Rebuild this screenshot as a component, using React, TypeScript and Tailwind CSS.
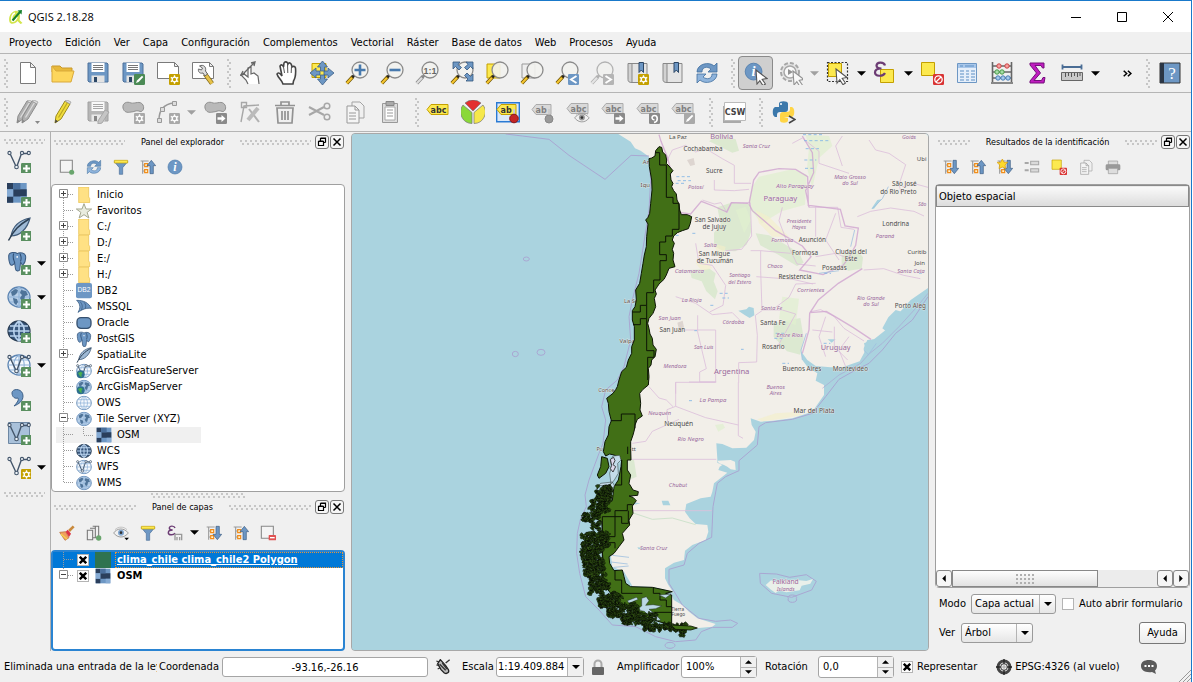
import type { ReactNode } from "react";

const BLUE = "#6d97c4";
const NAVY = "#2c4766";
const YEL = "#fce94f";
const GOLD = "#c4a000";

/* ---------- icon primitives ---------- */

function Icon({ children, className = "h-6 w-6", dim = false }: { children: ReactNode; className?: string; dim?: boolean }) {
  return (
    <svg viewBox="0 0 24 24" className={`${className} shrink-0 ${dim ? "opacity-60 grayscale" : ""}`} fill="none" aria-hidden="true">
      {children}
    </svg>
  );
}

function Badge({ kind, x = 13, y = 13 }: { kind: string; x?: number; y?: number }) {
  const fill: Record<string, string> = { plus: "#5a9060", star: GOLD, pen: "#4b8a55", no: "#d93434", right: "#8a8a8a", left: BLUE, fwd: "#b5b5b5", turn: "#8a8a8a", edit: "#a9a9a9", gstar: "#a9a9a9" };
  return (
    <g transform={`translate(${x} ${y})`}>
      <rect width="11" height="11" rx="1.2" fill={fill[kind]} />
      {kind === "plus" && <path d="M5.500 2v7M2 5.500h7" stroke="#fff" strokeWidth="2" />}
      {(kind === "star" || kind === "gstar") && <><path d="M5.500 1.300v8.400M1.800 3.400l7.400 4.200M9.200 3.400L1.800 7.600" stroke="#fff" strokeWidth="1.300" /><circle cx="5.500" cy="5.500" r="2.300" fill={kind === "star" ? GOLD : "#a9a9a9"} stroke="#fff" strokeWidth="1.300" /></>}
      {(kind === "pen" || kind === "edit") && <path d="M2 9l1-2.600L8 1.800l1.300 1.300L4.600 8z" fill="#fff" />}
      {kind === "no" && <><circle cx="5.500" cy="5.500" r="3.700" stroke="#fff" strokeWidth="1.300" /><path d="M3 8l5-5" stroke="#fff" strokeWidth="1.300" /></>}
      {kind === "right" && <path d="M1.500 4.300h4V2l4 3.500-4 3.500V6.700h-4z" fill="#fff" />}
      {kind === "left" && <path d="M8.500 2L3 5.500 8.500 9" stroke="#fff" strokeWidth="1.900" />}
      {kind === "fwd" && <path d="M2.500 2L8 5.500 2.500 9" stroke="#fff" strokeWidth="1.900" />}
      {kind === "turn" && <path d="M5 9.500C9.500 8.500 9 2.500 5.500 2.500S2.500 7 5.500 6.800" stroke="#fff" strokeWidth="1.600" />}
    </g>
  );
}

const Sheet = () => <path d="M4.500 1.500h10l5 5v16h-15zM14.500 1.500v5h5" fill="#fff" stroke="#7a7a7a" />;
const WideSheet = () => <path d="M1.500 1.500h17l4 4v12h-21zM18.500 1.500v4h4" fill="#fff" stroke="#7a7a7a" />;
const Disk = () => (
  <>
    <path d="M2 2h19l1 1v18H3l-1-1z" fill={BLUE} stroke="#4d709a" />
    <path d="M5.500 2h13v9h-13z" fill="#fff" />
    <path d="M7 4.500h10M7 6.500h10M7 8.500h10" stroke="#777" />
    <path d="M5.500 14.500h13v7h-13z" fill="#e3e3e3" />
    <path d="M8 16h3v5H8z" fill={NAVY} />
  </>
);
const Lens = ({ gray = false }: { gray?: boolean }) => (
  <>
    <path d="M1.800 22.200L8 15.600" stroke={gray ? "#888" : "#6b5200"} strokeWidth="3.600" />
    <path d="M1.800 22.200L7 16.700" stroke={gray ? "#ddd" : "#f4c430"} strokeWidth="2.200" />
    <path d="M7.500 16l2-2" stroke={gray ? "#888" : "#222"} strokeWidth="2.600" />
    <circle cx="15" cy="9" r="8" fill="#f2f2ee" fillOpacity="0.900" stroke="#8b8b8b" strokeWidth="1.300" />
  </>
);
const Tag = ({ on = false, w = 20, t = "abc" }: { on?: boolean; w?: number; t?: string }) => (
  <>
    <path d={`M1 11.500L5 6.500H${w + 2}v10H5z`} fill={on ? YEL : "#d9d9d9"} stroke={on ? GOLD : "#ababab"} />
    <text x="4.500" y="14.500" fontSize="8" fontWeight="700" fill={on ? "#333" : "#808080"} fontFamily="DejaVu Sans">{t}</text>
  </>
);
const Globe = ({ land = false, dark = false }: { land?: boolean; dark?: boolean }) => (
  <>
    <ellipse cx="12" cy="12" rx="11" ry="10" fill={dark ? "#38577d" : land ? "#b9d0e8" : "#f5f9fd"} stroke={dark ? "#2c3f55" : "#5d85b2"} strokeWidth="1.300" />
    <path d="M1.500 12h21M3 7h18M3 17h18M12 2v20M12 2c-7 5-7 15 0 20M12 2c7 5 7 15 0 20" stroke={dark ? "#b9d3ee" : "#8fb2d8"} strokeWidth={dark ? "1.600" : "1.100"} />
    {land && <path d="M4 7l4-3 3 1-1 3-2 2-3 1zM6 13l4 1 1 3-2 3-2-2zM14 5l5 1 2 4-3 1-1 4-2 2-2-4 2-3-2-2z" fill="#4f7499" />}
  </>
);
const VLine = ({ c = "#44566b" }: { c?: string }) => (
  <g stroke={c} strokeWidth="1.100" fill="#eef3f8">
    <path d="M3 4.500l6.500 14L14.500 4.500h6.500" fill="none" strokeWidth="1.400" />
    <circle cx="2.500" cy="4" r="1.600" /><circle cx="9.500" cy="18" r="1.800" /><circle cx="15" cy="4" r="1.600" /><circle cx="21.800" cy="4" r="1.600" />
  </g>
);
const Tiles = () => (
  <>
    <path d="M1 1h22v22H1z" fill={BLUE} />
    <path d="M1 1h7v7H1zM16 8h7v8h-7zM8 8h8v8H8zM1 16h7v7H1z" fill="#2a3f5c" />
    <path d="M8 1h8v7H8z" fill="#4a6f9c" />
    <path d="M1 8h7v8H1zM16 16h7v7h-7z" fill="#86abd4" />
  </>
);
const Elephant = () => (
  <>
    <path d="M2 6c0-5 8-5 10-3 3-2 10-1 10 4 0 4-1 7-3 9-2 1-2-2-3-3l-1 9c-1 2-5 2-5-1l-1-7c-1 2-4 4-5 2C2 13 2 9 2 6z" fill={BLUE} stroke="#3c5c82" strokeWidth="1.200" />
    <path d="M8 3c-2 4 0 7 1 11M15 3c2 3 2 6 1 9" stroke="#2f4d72" strokeWidth="1.200" /><circle cx="12" cy="7" r="1" fill="#fff" />
  </>
);
const Feather = () => (
  <>
    <path d="M23 1C13 3 6 8 4 19c8 0 16-6 19-18z" fill="#9fbad6" stroke="#3f5a78" strokeWidth="1.200" />
    <path d="M22 2C12 8 7 13 1.500 23.500" stroke="#2d4054" strokeWidth="1.500" />
  </>
);
const Refresh = () => (
  <>
    <path d="M2 11C2 3 14 0 19 5l3-3v9h-9l3-3C12 5 7 6 7 11z" fill={BLUE} stroke="#41709f" strokeWidth="0.800" />
    <path d="M22 13c0 8-12 11-17 6l-3 3v-9h9l-3 3c4 3 9 2 9-3z" fill="#8fb4dc" stroke="#41709f" strokeWidth="0.800" />
  </>
);
const Funnel = () => (
  <>
    <path d="M2 4h20l-7.500 9v10h-5V13z" fill={BLUE} stroke="#4d709a" />
    <path d="M2 2h20v4H2z" fill={YEL} stroke={GOLD} />
  </>
);
const Info = () => (
  <>
    <circle cx="12" cy="12" r="10.500" fill={BLUE} stroke="#4a78aa" />
    <text x="12" y="18" fontSize="18" fontStyle="italic" fontWeight="700" fill="#fff" textAnchor="middle" fontFamily="Liberation Serif">i</text>
  </>
);
const Branch = ({ up = false }: { up?: boolean }) => (
  <>
    <path d="M1 3h12M4 3v19M4 9h3M4 18h3" stroke="#999" strokeWidth="1.600" />
    <path d="M7 7h4.500v4.500H7zM7 16h4.500v4.500H7z" fill="#fff3d0" stroke="#f08c1a" strokeWidth="1.800" />
    {up ? <path d="M15 22V10h-4.500L17 2l6.500 8H20v12z" fill={BLUE} stroke="#3c5c82" /> : <path d="M15 2v12h-4.500L17 22l6.500-8H20V2z" fill={BLUE} stroke="#3c5c82" />}
  </>
);
const Cursor = ({ x = 0, y = 0 }: { x?: number; y?: number }) => (
  <path transform={`translate(${x} ${y})`} d="M0 0l11 8.500-4.800.8 3.200 4.700-2.400 1.700-3.200-5L1 14z" fill="#fff" stroke="#555" strokeWidth="1.100" />
);
const Book = () => (
  <>
    <path d="M3 2.500h19v19H7" fill="#e4e4e4" stroke="#888" />
    <path d="M3 2.500v16c0 2 1 3 4 3v-19z" stroke="#888" fill="#d2d2d2" />
    <path d="M14 1.500h4.500v10l-2.200-2.500-2.300 2.500z" fill={BLUE} stroke={NAVY} />
  </>
);
const Pencil = ({ y = true }: { y?: boolean }) => (
  <>
    <path d="M5 16L14 1l5 3-9 15-6 4z" fill={y ? "#f0dc3c" : "#b0b0b0"} stroke={y ? "#9b8a1c" : "#8d8d8d"} />
    <path d="M7.500 17.500l9-15" stroke={y ? "#b9a524" : "#ddd"} strokeWidth="1.200" />
    <path d="M14 1l5 3 1-2-4-2z" fill="#ddd" stroke="#999" strokeWidth="0.700" />
    <path d="M4.500 19.500L4 23l3-1.700z" fill={y ? "#444" : "#888"} />
  </>
);
const Blob = () => <path d="M2 8c-1-5 4-7 8-5 4 1 9-3 12 2 2 4-1 8-4 6-3-1-5 1-8 1-4 1-7 0-8-4z" fill="#b9b9b9" stroke="#909090" />;
const Docs = () => (
  <>
    <path d="M9 2h8l4 4v12H9z" fill="#f0f0f0" stroke="#a3a3a3" />
    <path d="M4 6h8l4 4v13H4zM12 6v4h4M6 13h7M6 16h7M6 19h7" fill="#f5f5f5" stroke="#999" />
  </>
);
const Eye = ({ c = "#7fa5cf" }: { c?: string }) => (
  <>
    <path d="M1 12C6 4 17 4 23 12c-6 8-16 8-22 0z" fill="#f1f1f1" stroke="#909090" strokeWidth="1.300" />
    <circle cx="12" cy="11.500" r="4.500" fill={c} /><circle cx="12" cy="11.500" r="2" fill="#333" />
    <path d="M3 7C8 2 16 2 21 7" stroke="#aaa" />
  </>
);
const FolderIco = () => <path d="M4 0h15v15l1.500 2v6.500H4z" fill="#ffe184" stroke="#e6bd4a" />;
const Epsilon = () => <path d="M12 4.500C11 1 4 .5 3.500 4.500 3.500 7 6 7.500 8.500 7.500 4.500 7.500 2 9 2 11.500c0 4 8 4.500 10 .5" stroke="#6c3c74" strokeWidth="2.200" />;

/* ---------- controls ---------- */

function Tool({ label, children, active = false, dim = false }: { label: string; children: ReactNode; active?: boolean; dim?: boolean }) {
  return (
    <button type="button" aria-label={label} className={`flex h-[34px] w-[35px] shrink-0 items-center justify-center ${active ? "rounded-sm border border-[#8a8a8a] bg-[#cfcfcf]" : ""}`}>
      <Icon dim={dim}>{children}</Icon>
    </button>
  );
}

function MiniTool({ label, children, dim = false }: { label: string; children: ReactNode; dim?: boolean }) {
  return (
    <button type="button" aria-label={label} className="flex h-6 w-[27px] shrink-0 items-center justify-center">
      <Icon className="h-4 w-4" dim={dim}>{children}</Icon>
    </button>
  );
}

function Caret({ dim = false, label = "Más opciones" }: { dim?: boolean; label?: string }) {
  return (
    <button type="button" aria-label={label} className="flex h-6 w-3 shrink-0 items-center justify-center">
      <svg viewBox="0 0 10 5" className="h-[5px] w-[9px]" aria-hidden="true"><path d="M0 0h10L5 5z" fill={dim ? "#a0a0a0" : "#000"} /></svg>
    </button>
  );
}

function Grip({ className }: { className: string }) {
  return <div aria-hidden="true" className={`bg-[radial-gradient(circle_at_1px_1px,#c6c6c6_1px,transparent_1px),radial-gradient(circle_at_3px_4px,#c6c6c6_1px,transparent_1px)] bg-[length:5px_6px] ${className}`} />;
}

function VGrip({ className = "" }: { className?: string }) {
  return <div className={`flex shrink-0 justify-center ${className}`}><Grip className="h-[29px] w-[5px]" /></div>;
}

function PanelTitle({ title }: { title: string }) {
  return (
    <div className="flex h-4 items-center">
      <Grip className="ml-[3px] h-[5px] flex-1" />
      <h2 className="px-4 text-[9px] leading-4">{title}</h2>
      <Grip className="mr-1 h-[5px] flex-1" />
      <button type="button" aria-label={`Desacoplar ${title}`} className="mr-px flex h-[14px] w-[14px] items-center justify-center rounded-[3px] border border-[#777] bg-[#f6f6f6]">
        <svg viewBox="0 0 10 10" className="h-[10px] w-[10px]" fill="none" stroke="#000" aria-hidden="true"><path d="M3.500 1h5v4.500M3.500 1.500h5M1.500 4.500h5v4h-5zM1.500 4h5M3.500 1v3M8.500 5.500h-2" strokeWidth="1.200" /></svg>
      </button>
      <button type="button" aria-label={`Cerrar ${title}`} className="mr-px flex h-[14px] w-[14px] items-center justify-center rounded-[3px] border border-[#777] bg-[#f6f6f6]">
        <svg viewBox="0 0 10 10" className="h-[10px] w-[10px]" stroke="#000" strokeWidth="1.500" aria-hidden="true"><path d="M1.500 1.500l7 7M8.500 1.500l-7 7" /></svg>
      </button>
    </div>
  );
}

function CheckBox({ id, checked }: { id: string; checked: boolean }) {
  return (
    <span className="relative flex h-3 w-3 shrink-0 items-center justify-center">
      <input id={id} type="checkbox" defaultChecked={checked} className="peer h-3 w-3 appearance-none border border-[#b4b4b4] bg-white" />
      <svg viewBox="0 0 10 10" className="pointer-events-none absolute hidden h-2 w-2 peer-checked:block" stroke="#000" strokeWidth="3" aria-hidden="true"><path d="M1 1l8 8M9 1L1 9" /></svg>
    </span>
  );
}

function Combo({ id, options, className }: { id: string; options: string[]; className: string }) {
  return (
    <span className={`relative flex h-5 items-center rounded-[3px] border border-[#9a9a9a] bg-linear-to-b from-white to-[#e6e6e6] ${className}`}>
      <select id={id} className="h-full w-full appearance-none bg-transparent pr-4 pl-[3px] text-[11px]">
        {options.map((o) => <option key={o}>{o}</option>)}
      </select>
      <span className="pointer-events-none absolute inset-y-0 right-0 flex w-4 items-center justify-center border-l border-[#b4b4b4]">
        <svg viewBox="0 0 8 4" className="h-1 w-2" aria-hidden="true"><path d="M0 0h8L4 4z" /></svg>
      </span>
    </span>
  );
}

function Spin({ id, value }: { id: string; value: string }) {
  return (
    <span className="flex h-[22px] w-[76px] shrink-0 rounded-[3px] border border-[#a5a5a5] bg-white">
      <input id={id} defaultValue={value} className="w-0 flex-1 bg-transparent px-1 text-[11px]" />
      <span className="flex w-4 flex-col border-l border-[#b4b4b4] bg-[#f0f0f0]">
        <button type="button" aria-label="Aumentar" className="flex flex-1 items-center justify-center border-b border-[#b4b4b4]"><svg viewBox="0 0 8 4" className="h-1 w-[7px]" aria-hidden="true"><path d="M0 4h8L4 0z" /></svg></button>
        <button type="button" aria-label="Disminuir" className="flex flex-1 items-center justify-center"><svg viewBox="0 0 8 4" className="h-1 w-[7px]" aria-hidden="true"><path d="M0 0h8L4 4z" /></svg></button>
      </span>
    </span>
  );
}

/* ---------- explorer tree ---------- */

type TreeRow = { name: string; icon: ReactNode; mark?: "+" | "-"; child?: boolean };

const MiniEarth = () => <><circle cx="7" cy="17" r="6" fill="#2d6f8e" /><path d="M3 15l4-2 3 2-2 3 1 3-3-1z" fill="#4bb04f" /></>;

const treeRows: TreeRow[] = [
  { name: "Inicio", icon: <FolderIco />, mark: "+" },
  { name: "Favoritos", icon: <path d="M12 1l3 8h8.500l-6.800 5 2.600 8.500L12 17.500 4.700 22.500l2.600-8.500L.5 9H9z" fill="#e9ecdf" stroke="#a3a68f" strokeWidth="1.500" /> },
  { name: "C:/", icon: <FolderIco />, mark: "+" },
  { name: "D:/", icon: <FolderIco />, mark: "+" },
  { name: "E:/", icon: <FolderIco />, mark: "+" },
  { name: "H:/", icon: <FolderIco />, mark: "+" },
  { name: "DB2", icon: <><rect width="24" height="23" rx="3" fill={BLUE} /><text x="12" y="14" fontSize="10" textAnchor="middle" fill="#fff" fontFamily="Liberation Sans">DB2</text></> },
  { name: "MSSQL", icon: <path d="M1 2c11 0 18 4 22 12-7-1-13 1-20 6 4-6 4-12-2-18zM6 4c4 4 4 8 2 13M12 5c3 3 3 6 2 9" fill={BLUE} stroke="#3f6188" strokeWidth="1.300" /> },
  { name: "Oracle", icon: <rect x="1.500" y="4" width="21" height="16" rx="6" fill={BLUE} stroke="#35506f" strokeWidth="2" /> },
  { name: "PostGIS", icon: <Elephant /> },
  { name: "SpatiaLite", icon: <Feather />, mark: "+" },
  { name: "ArcGisFeatureServer", icon: <><Globe /><VLine /><MiniEarth /></> },
  { name: "ArcGisMapServer", icon: <><Globe land /><MiniEarth /></> },
  { name: "OWS", icon: <Globe /> },
  { name: "Tile Server (XYZ)", icon: <Globe land />, mark: "-" },
  { name: "OSM", icon: <Tiles />, child: true },
  { name: "WCS", icon: <Globe dark /> },
  { name: "WFS", icon: <><Globe /><VLine /></> },
  { name: "WMS", icon: <Globe land /> },
];

function BranchMark({ mark, first = false, last = false }: { mark?: "+" | "-"; first?: boolean; last?: boolean }) {
  return (
    <svg viewBox="0 0 20 16" className="h-4 w-5 shrink-0" fill="none" aria-hidden="true">
      <path d={`M7.500 ${first ? 7 : 0}V${last ? 8 : 16}M8 7.500h10`} stroke="#9a9a9a" strokeDasharray="1 1" />
      {mark && <path d="M3.500 2.500h8v8h-8z" fill="#fff" stroke="#8c8c8c" />}
      {mark && <path d={mark === "+" ? "M5 6.500h5M7.500 4v5" : "M5 6.500h5"} stroke="#444" />}
    </svg>
  );
}

/* ---------- map ---------- */

const provinceNames: [string, number, number, number][] = [
  ["Bolivia", 518, 27, 22], ["Goiás", 1080, 26, 17], ["Santa Cruz", 622, 53, 17], ["Potosí", 440, 176, 17], ["Alto Paraguay", 738, 173, 18],
  ["Paraguay", 694, 213, 23], ["Mato Grosso", 903, 147, 17], ["do Sul", 903, 166, 17], ["Presidente", 750, 278, 16], ["Hayes", 750, 297, 16],
  ["Formosa", 700, 335, 17], ["Paraná", 1008, 323, 17], ["Salta", 484, 350, 17], ["Chaco", 678, 413, 17], ["Catamarca", 421, 429, 18],
  ["Santiago", 572, 442, 16], ["del Estero", 572, 461, 16], ["Corrientes", 785, 486, 18], ["Santa Cata", 1086, 429, 17], ["Rio Grande", 966, 509, 17],
  ["do Sul", 966, 528, 17], ["La Rioja", 428, 516, 17], ["San Juan", 362, 570, 17], ["Córdoba", 553, 581, 17], ["Santa Fe", 668, 539, 17],
  ["Entre Ríos", 722, 620, 18], ["Uruguay", 860, 659, 22], ["San Luis", 464, 657, 16], ["Mendoza", 378, 714, 17], ["Argentina", 548, 732, 23],
  ["Buenos", 680, 777, 17], ["Aires", 680, 796, 17], ["La Pampa", 492, 817, 18], ["Neuquén", 332, 855, 17], ["Río Negro", 425, 934, 18],
  ["Chubut", 387, 1071, 17], ["Santa Cruz", 314, 1260, 17], ["Falkland", 710, 1361, 20], ["Islands", 710, 1382, 17], ["São", 1120, 229, 15],
];

const cityNames: [string, number, number, number][] = [
  ["La Paz", 387, 27, 18], ["Cochabamba", 462, 62, 19], ["Sucre", 496, 129, 19], ["Ubi", 1118, 94, 18], ["São José", 1066, 168, 19], ["do Rio Preto", 1048, 192, 19],
  ["San Salvado", 491, 276, 19], ["de Jujuy", 496, 298, 19], ["Londrina", 1040, 289, 19], ["Asunción", 790, 336, 19], ["Formosa", 768, 374, 19],
  ["Ciudad del", 906, 373, 19], ["Este", 906, 394, 19], ["Curitib", 1104, 371, 18], ["Join", 1112, 406, 18], ["San Migue", 496, 378, 19], ["de Tucumán", 498, 400, 19],
  ["Posadas", 856, 419, 19], ["Resistencia", 738, 446, 19], ["Porto Aleg", 1084, 534, 19], ["Santa Fe", 672, 584, 19], ["San Juan", 370, 606, 19],
  ["Rosario", 673, 657, 19], ["Buenos Aires", 759, 723, 19], ["Montevideo", 904, 722, 19], ["Neuquén", 389, 888, 20], ["Mar del Plata", 795, 850, 20],
  ["La Se", 246, 518, 17], ["Valpa", 235, 639, 18], ["Conce", 172, 785, 17], ["Iqu", 289, 170, 18], ["Ar", 291, 102, 18], ["Pu", 152, 964, 16], ["tt", 254, 964, 16],
  ["Tierra", 386, 1442, 14], ["Fuego", 388, 1458, 14],
];

const islandBands: [number, number, number, number, number][] = [
  [112, 158, 318, 362, 60], [94, 150, 355, 400, 60], [72, 120, 398, 422, 28], [100, 124, 425, 455, 12], [70, 150, 458, 505, 90], [68, 130, 500, 545, 80],
  [76, 134, 540, 590, 75], [90, 150, 580, 625, 70], [92, 130, 620, 640, 18], [120, 190, 640, 680, 70], [145, 235, 672, 708, 75], [190, 290, 700, 732, 75], [255, 385, 732, 750, 75], [364, 378, 752, 768, 8],
];

function buildIslands() {
  let seed = 71;
  const rnd = () => {
    seed = (seed * 16807) % 2147483647;
    return seed / 2147483647;
  };
  let d = "";
  for (const [x0, x1, y0, y1, n] of islandBands) {
    for (let i = 0; i < n; i++) {
      const cx = x0 + rnd() * (x1 - x0);
      const cy = y0 + rnd() * (y1 - y0);
      for (let k = 0; k < 7; k++) {
        const a = (k / 7) * Math.PI * 2;
        const r = 2 + rnd() * 7;
        d += `${k ? "L" : "M"}${(cx + Math.cos(a) * r).toFixed(1)} ${(cy + Math.sin(a) * r).toFixed(1)}`;
      }
      d += "Z";
    }
  }
  return d;
}
const islands = buildIslands();

const landPoints = "208,12 245,35 258,55 275,62 300,80 320,200 310,300 295,430 275,520 270,640 235,740 215,790 205,880 195,960 225,1000 215,1080 200,1200 200,1240 186,1280 190,1310 225,1325 250,1368 310,1371 345,1378 374,1388 358,1365 348,1345 348,1315 375,1298 405,1290 408,1262 430,1245 470,1230 478,1205 475,1185 440,1182 422,1165 408,1145 412,1122 455,1105 485,1100 490,1085 495,1060 520,1040 535,1028 508,1020 512,1010 520,1005 505,998 505,988 502,940 520,942 550,955 592,953 615,930 620,905 608,885 605,865 635,875 672,872 730,865 790,845 825,795 825,765 800,752 805,730 775,710 760,690 757,665 775,690 800,708 845,712 880,712 932,694 950,660 945,640 975,628 1010,600 1045,555 1085,510 1137,474 1400,300 1400,-50 208,-50";

const chilePoints = "318,78 320,62 330,50 338,52 341,66 350,75 353,90 352,100 360,108 372,122 364,132 366,150 372,160 368,170 374,182 382,192 384,210 390,222 392,240 397,254 415,254 428,260 424,280 418,296 400,302 385,308 374,318 370,330 376,340 370,358 374,370 372,390 378,410 360,415 352,435 345,448 330,462 325,470 318,480 322,492 316,505 320,530 312,550 300,565 296,580 300,595 303,612 310,625 312,645 322,658 318,680 308,690 306,705 298,715 300,740 298,765 282,778 272,790 275,820 273,840 280,858 265,868 258,885 256,900 252,915 245,935 245,955 246,990 235,990 235,1020 245,1035 240,1060 252,1080 268,1085 266,1096 240,1098 252,1102 262,1112 250,1128 252,1150 240,1170 242,1185 220,1210 225,1230 210,1250 195,1270 180,1280 182,1300 195,1322 220,1320 225,1340 230,1360 245,1370 310,1372 370,1385 350,1390 368,1395 368,1485 330,1475 300,1465 270,1450 230,1430 200,1410 170,1370 160,1340 162,1290 158,1240 140,1220 160,1200 158,1175 130,1160 140,1140 155,1110 190,1112 195,1070 208,1050 216,1010 218,990 206,980 195,975 182,972 170,978 163,965 168,935 178,915 180,890 187,872 180,845 178,820 173,805 192,790 200,779 205,770 210,750 218,725 232,712 238,690 248,670 248,650 256,630 256,590 250,570 250,542 258,530 262,510 260,480 272,460 277,430 282,400 286,375 292,350 293,320 297,282 290,270 297,262 302,250 305,220 309,180 308,150 301,110 300,86 308,84";

function MapCanvas() {
  return (
    <svg viewBox="-591 12 1728 1548" preserveAspectRatio="xMidYMid slice" className="h-full w-full" role="img" aria-label="Mapa de Chile sobre OSM">
      <rect x="-2000" y="-1000" width="6000" height="4000" fill="#aad3df" />
      <polygon points={landPoints} fill="#f2efe9" />
      <path d="M505 992L545 990 558 995 560 1020 545 1018 535 1010 525 1005 510 1000ZM366 1390L374 1410 400 1425 420 1445 445 1465 500 1482 490 1490 440 1495 368 1486Z" fill="#f2efe9" />
      <g fill="#aad3df">
        <path d="M568 542l24-4 8-8 14 4 2 22-14 8-14-8zM1000 595L1018 562 1040 540 1058 545 1040 575 1010 603zM944 655L955 630 975 628 962 650 948 672zM985 210l12-2-22 28-8 0zM836 628l24 0-12 10zM338 1112l20 0 6 14-22 0zM265 1252l22 2-18 4zM248 1116l26 4-24 6z" />
      </g>
      <g fill="#cfe5c4" opacity="0.650">
        <path d="M505 232l42-14 56 6 4 80-14 40-34 20-38-2-26-14 0-40 20-24zM560 218l40 4 4 80-30 4-20-18-20-30z" />
        <path d="M422 420l60-4 18 14-6 24 12 30-8 24-26-24-14-30-30-10zM480 34l30-20 50 14 10 34-20 6-60-30zM620 310l40 6 40 22 50 30 14 30-20 10-60-36-50-26zM878 376l48-14 16 20-4 34-40 6-20-12zM674 580l80-16 10 60-10 50-40-10-40-44zM235 990l20 0 8 50-24 10zM245 810l14 40-8 40-14-20z" />
      </g>
      <g fill="#dff0cf" opacity="0.700">
        <path d="M630 140l100-22 44 16-6 90-70 20-60 36-40-50 12-60zM770 14l70 4 10 30-40 36-20 90-16-60 6-60zM700 500l50 6-10 80-50-20zM498 885l24-4 6 12-20 12zM560 240l30-10 16 40-20 40z" />
      </g>
      <g fill="#f4efc8" opacity="0.600"><path d="M440 400l30-6 20 20-30 10zM620 240l40 20 60 60-50 0-40-40zM490 340l40 10-10 40zM625 868L680 850 740 846 760 854 700 866 640 874z" /></g>
      <g stroke="#dcbfdb" strokeWidth="2.500" fill="none">
        <path d="M350 100l20-40 40-14 30 20 30-10 50 30 36 20v54h50M496 150l0 30 60 2 44-4M460 210l36 12 20-4 18 30 14-30h56l4 100-30 40-48 4M605 362h30v60l4 120-20 14 6 60-2 80-54 2v60M635 362l90 8M440 340l10 60 40 6 40 60-8 60-40 20M380 500l60 20 50 34 60-6 30 30M400 600l100 0M446 556v50l14 60 12 50-20 10v30h50M500 600v156H420M640 540h60l40 12-50 90-20 14M622 440l110 8 60 14M800 460l-60 2-20 40-40 30M785 545l30-6 40 20 30 36 60 38M856 590l0 60 40 40M790 600l60 6M830 560l-20 60 20 60M900 620l-30 40 20 50M925 260l40-16 60-10 70 10 30 14M944 420l60-4 60 20 50 10M700 232l-10 40 30 80 24 50 56 6M800 380l60-10 50 20M780 232l50 0 36 0 10 60 40 6M800 230l0 90M860 250l-30 80 40 60M730 40l30-16 50 40 0 36 60 20 30 10M880 18l-20 30 20 60" />
        <path d="M380 757v34M568 757v160l14 8M248 988h254M380 757v72l-26 10 2 40M248 1142h240M380 829l90 34 98 22M300 770l30 34 22 6 20 20M250 940l40-6 20-30 80-36M380 757h120" />
        <path d="M960 30l20 30 40 10 50 34-20 60 8 30M1060 170l40-8 37 10" />
      </g>
      <g stroke="#cfa4cf" strokeWidth="4" fill="none" opacity="0.800">
        <path d="M330 14l6 20 20 50 10 40M395 248l30 4 32-38 36 14 40 18 14-28 50 2M600 222L614 150 630 127 690 116 740 118 776 140 778 228M600 222l10 20 70 60 80 46 26 32-34 40 70 14 60-28 16-20 22-40 8-52-40-6-14-50-94-12M780 232l-10-50 24-54-4-60-30-50M940 416L868 460 808 510 782 550 780 600 760 670M782 548l50-4 40 24 40 24 54 36" />
      </g>
      <g stroke="#a99fd0" strokeWidth="3" fill="none" opacity="0.850">
        <path d="M-130 12L-80 18 0 28 60 76 168 148 246 76 300 78M300 85L305 150 300 240 286 330 270 430 250 510 240 560 245 630 225 710 205 750 170 780 158 830 170 870 162 940 150 970 135 1010 120 1050 108 1095 112 1130 95 1165 85 1210 83 1270 92 1330 110 1400 150 1440 190 1485 260 1490 320 1520 380 1535 440 1530 457 1505 490 1492 550 1492 566 1480 545 1470 500 1474 450 1465 400 1425 380 1392 360 1360 360 1318 405 1305 415 1270 450 1240 488 1222 492 1130 505 1060 530 1040 570 1022 570 992 625 945 630 890 650 878 730 868 790 850 830 800 870 748 920 720 960 700 1000 660 1040 610 1090 570 1137 500" />
        <path d="M820 775L870 735 935 700 960 672 1000 640 1050 590 1100 535 1137 490" strokeWidth="2" />
        <path d="M632 1330l50 2 40 10 50-8 30 20-14 26-60 22-60-12-34-30zM718 1406a13 8 0 1 0 24 0a13 8 0 1 0-24 0M348 1546a15 9 0 1 0 30 0a15 9 0 1 0-30 0M-110 672a9 8 0 1 0 18 0a9 8 0 1 0-18 0M-36 667a12 9 0 1 0 24 0a12 9 0 1 0-24 0M-77 387a9 6 0 1 0 18 0a9 6 0 1 0-18 0" />
      </g>
      <g stroke="#7fb5e6" strokeWidth="2.500" strokeDasharray="9 7" fill="none">
        <path d="M762 14h60M765 32h80M770 56h40M766 90h36M768 115h30M382 140h44M386 152h40M380 160h30M400 290h12M430 310h10M512 490h24M520 504h20M484 526h10M680 610h30M676 625h24M700 700h20M824 640h20M826 430h20M576 658h8M436 602h8M420 812h10M1110 430h16M380 316h16" />
      </g>
      <path d="M970 236l30-30 18-36M905 350l12-50M810 430l60-8M760 690l-4-30 16-50M944 660l14 14 24-34M190 1276l50 6M186 1296l50 6M195 1312l44-4" stroke="#9dbfe0" strokeWidth="3" fill="none" opacity="0.800" />
      <path d="M250 1148l60 20 60-4 70 20" stroke="#cfe3cd" strokeWidth="3" fill="none" />
      <path d="M385 578l16-6 4 20-14 10zM414 90l20-6 4 20-14 4z" fill="#ddd5d0" />
      <path d="M650 1365l16-14 24 8 16-8 30-2 36 4 20-6-8 14-26 6-6 14-40 6-22-6-10 8-14-10z" fill="#e9f0ea" />

      <g fontFamily="Noto Sans, sans-serif" textAnchor="middle">
        {provinceNames.map(([t, x, y, s], i) => (
          <text key={i} x={x} y={y} fontSize={s} fontStyle={s > 19 ? "normal" : "italic"} fill="#9a6a9e" stroke="#f2efe9" strokeWidth="2" paintOrder="stroke">{t}</text>
        ))}
        {cityNames.map(([t, x, y, s], i) => (
          <text key={i} x={x} y={y} fontSize={s} fill="#4a4a4a" stroke="#f2efe9" strokeWidth="2" paintOrder="stroke">{t}</text>
        ))}
      </g>

      <g fill="#416f16" stroke="#0d1505" strokeWidth="3" strokeLinejoin="round">
        <polygon points={chilePoints} />
        <polygon points="158,980 175,985 180,1010 170,1030 150,1045 145,1035 155,1010" />
      </g>
      <g stroke="#0d1505" strokeWidth="3" fill="none">
        <path d="M320 68H332V105H352V202H372V220H390V298H370V318H350V336H332V374H352V392H333V450H314V488H293V526H274V546H250M293 526V566H274V584H252M293 566V662H315V682H296V750" />
        <path d="M185 872H217V852H258V895M236 950V972M218 990V1065H198M198 1220V1142H235V1124H250M238 1142V1180H218V1160H160V1220H198M160 1238H198V1255M160 1238V1330M198 1320V1350H218V1390H280M313 1372V1390H333V1410H352V1430H368M315 1447H368" />
      </g>
      <path d="M192 978L212 976 216 990 206 1000 208 1030 196 1050 186 1062 182 1030 188 1010 184 992ZM155 1060L190 1056 196 1066 182 1110 186 1070 150 1066Z" fill="#c4dcea" stroke="#26322e" strokeWidth="1.500" />
      <path d="M235 1412L262 1402 268 1408 240 1420ZM278 1405L292 1400 300 1412 290 1426 312 1424 338 1428 320 1436 300 1438 318 1452 336 1470 322 1472 300 1458 286 1444 262 1440 278 1428ZM330 1395L366 1392 350 1404Z" fill="#bcd9e6" stroke="#26322e" strokeWidth="1.500" />
      <path d="M184 988l10-6 4 10-6 12 8 6-8 16-8-10 4-10zM134 1190l16-14-4 18z" fill="#ded9ec" stroke="#222" strokeWidth="2.500" />
      <g transform="translate(30 750)">
        <path d={islands} fill="#24430e" stroke="#070b05" strokeWidth="1.700" />
        <path d={islands} fill="none" stroke="#44701b" strokeWidth="1.200" strokeDasharray="3 14" />
        <path d="M335 735L395 738 415 744 395 750 350 748z" fill="#416f16" stroke="#0d1505" strokeWidth="2.500" />
      </g>
    </svg>
  );
}

/* ---------- page ---------- */

const menus = ["Proyecto", "Edición", "Ver", "Capa", "Configuración", "Complementos", "Vectorial", "Ráster", "Base de datos", "Web", "Procesos", "Ayuda"];

const layerTools: { label: string; icon: ReactNode; badge: string; caret?: boolean }[] = [
  { label: "Añadir capa vectorial", icon: <VLine />, badge: "plus" },
  { label: "Añadir capa ráster", icon: <g transform="translate(-1 -1) scale(.9)"><Tiles /></g>, badge: "plus" },
  { label: "Añadir capa SpatiaLite", icon: <Feather />, badge: "plus" },
  { label: "Añadir capas PostGIS", icon: <g transform="scale(.85)"><Elephant /></g>, badge: "plus", caret: true },
  { label: "Añadir capa WMS", icon: <Globe land />, badge: "plus", caret: true },
  { label: "Añadir capa WCS", icon: <Globe dark />, badge: "plus" },
  { label: "Añadir capa WFS", icon: <><Globe /><VLine /></>, badge: "plus", caret: true },
  { label: "Añadir texto delimitado", icon: <path d="M5 6c0-5 11-5 11 3 0 5-4 8-9 10 4-4 5-7 4-8-3 1-6-1-6-5z" fill={BLUE} stroke="#3f6188" />, badge: "plus" },
  { label: "Añadir capa virtual", icon: <><path d="M1.500 1.500h21v21h-21z" fill="#a9c1da" stroke="#6d87a3" /><VLine /></>, badge: "plus" },
  { label: "Nueva capa", icon: <VLine />, badge: "star", caret: true },
];

export default function App() {
  return (
    <div className="mr-px flex h-screen min-h-[600px] flex-col overflow-hidden border-t border-r border-[#1979ca] bg-[#f0f0f0] font-['DejaVu_Sans_Condensed','Noto_Sans',sans-serif] text-[11px] leading-4 text-black">
      <header className="flex h-[31px] shrink-0 items-center bg-white pl-2">
        <svg viewBox="0 0 16 16" className="h-4 w-4" fill="none" aria-hidden="true">
          <path d="M7 2C3 3 0 8 1.500 13c1 3 6 2 8-1l3 3 2-1-3-3C13 6 11 1 7 2z" fill="#d3e54b" />
          <path d="M7 4c-3 1-4 5-3 8 2 1 4-1 5-4" stroke="#fff" strokeWidth="1.400" />
          <path d="M4.500 11.500L12 3" stroke="#16802d" strokeWidth="2" /><path d="M9.500 1.500L14 1l-.5 4.500z" fill="#16802d" />
        </svg>
        <h1 className="ml-1 flex-1 font-['Open_Sans','Noto_Sans',sans-serif] text-[11px]">QGIS 2.18.28</h1>
        <button type="button" aria-label="Minimizar" className="flex h-full w-[46px] items-center justify-center"><svg viewBox="0 0 10 10" className="h-[10px] w-[10px]" stroke="#000" aria-hidden="true"><path d="M0 5.500h10" /></svg></button>
        <button type="button" aria-label="Maximizar" className="flex h-full w-[46px] items-center justify-center"><svg viewBox="0 0 10 10" className="h-[10px] w-[10px]" fill="none" stroke="#000" aria-hidden="true"><path d="M.5.5h9v9h-9z" /></svg></button>
        <button type="button" aria-label="Cerrar" className="flex h-full w-[46px] items-center justify-center"><svg viewBox="0 0 10 10" className="h-[10px] w-[10px]" stroke="#000" aria-hidden="true"><path d="M0 0l10 10M10 0L0 10" /></svg></button>
      </header>

      <nav className="flex h-[22px] shrink-0 items-center gap-[13px] border-b border-[#b5b5b5] pt-px pl-[9px]">
        {menus.map((m) => <button type="button" key={m}>{m}</button>)}
      </nav>

      <div role="toolbar" aria-label="Navegación" className="flex h-[39px] shrink-0 items-center border-b border-[#b5b5b5] pr-1 pl-[3px]">
        <VGrip className="w-[7px]" />
        <Tool label="Nuevo"><Sheet /></Tool>
        <Tool label="Abrir"><path d="M1 5h8l2 2h10v4H1z" fill="#e8b93a" stroke="#c9992a" /><path d="M1 21V5l4 5h18l-3 11z" fill="#fdd65c" stroke="#d9a93a" /></Tool>
        <Tool label="Guardar"><Disk /></Tool>
        <Tool label="Guardar como"><Disk /><Badge kind="pen" /></Tool>
        <Tool label="Nuevo diseño"><WideSheet /><Badge kind="star" /></Tool>
        <Tool label="Administrador de diseñadores"><WideSheet /><path d="M14 13l7 9.500" stroke="#7b6314" strokeWidth="4.600" /><path d="M14 13l7 9.500" stroke="#e6c14a" strokeWidth="3" /><path d="M8.500 5c4-2 7 1 6 5l2 3-2.500 2-2-3c-4 1-5-2-4.500-4l3 1 1-2z" fill="#ddd" stroke="#666" /></Tool>
        <VGrip className="w-[14px] pl-1" />
        <Tool label="Desplazar con toque"><path d="M8 23l-2-4-5-5 3-1 4 3V7l3-1v7l3-1 4 3 1 8" fill="#fff" stroke="#666" strokeWidth="1.200" /><path d="M2 14L14 2M11 2l4-1-1 4M3 10l-2 4 4-1" stroke="#666" strokeWidth="1.300" /></Tool>
        <Tool label="Desplazar mapa"><path d="M8 23c-1-4-5-6-6-10 1-2 3-1 5 2L5 5c1-2 3-1 3.500 1L9 2c1-2 3-1 3.500 0l.5 1c1-2 3-1 3.500 1l.5 2c1-1 3-1 3.500 1 .5 6 0 10-2 13l-.5 3z" fill="#fff" stroke="#444" strokeWidth="1.600" /><path d="M8.500 6l1 6M12.500 3l.3 9M16.500 5l-.3 7" stroke="#555" /></Tool>
        <Tool label="Desplazar a la selección"><path d="M2 2.500h14v14H2z" fill={YEL} stroke={GOLD} /><path d="M12.500 0l5 6h-3v4h-4V6h-3zM12.500 24l5-6h-3v-4h-4v4h-3zM0 12l6-5v3h4v4H6v3zM24 12l-6-5v3h-4v4h4v3z" fill={BLUE} stroke="#3e5f86" strokeWidth="0.800" /></Tool>
        <Tool label="Acercar"><Lens /><path d="M15 3.500v11M9.500 9h11" stroke="#4779ad" strokeWidth="2.600" /></Tool>
        <Tool label="Alejar"><Lens /><path d="M9.500 9h11" stroke="#4779ad" strokeWidth="2.600" /></Tool>
        <Tool label="Resolución nativa"><Lens gray /><text x="15" y="12.500" fontSize="9" fontWeight="700" fill="#666" textAnchor="middle" fontFamily="Liberation Sans">1:1</text></Tool>
        <Tool label="Zum general"><Lens /><path d="M3 1h7L8 3.500l3.500 3L9 9 5.500 5.500 3 8zM23 1h-7l2 2.500-3.500 3L17 9l3.500-3.500L23 8zM23 20h-7l2-2-3.500-3.500L17 12l3.500 3.500L23 13z" fill={BLUE} stroke="#33557c" strokeWidth="0.800" /></Tool>
        <Tool label="Zum a la selección"><path d="M2 3h13v14H2z" fill={YEL} stroke={GOLD} /><Lens /></Tool>
        <Tool label="Zum a la capa"><path d="M2 3h13v14H2z" fill="#eee" stroke="#999" /><Lens /></Tool>
        <Tool label="Zum anterior"><Lens /><Badge kind="left" /></Tool>
        <Tool label="Zum siguiente"><g opacity="0.600"><Lens gray /></g><Badge kind="fwd" /></Tool>
        <Tool label="Nuevo marcador"><Book /><Badge kind="star" /></Tool>
        <Tool label="Mostrar marcadores"><Book /></Tool>
        <Tool label="Actualizar"><Refresh /></Tool>
        <VGrip className="w-[14px] pl-1" />
        <Tool label="Identificar objetos" active><g transform="translate(0 1) scale(.8)"><Info /></g><Cursor x={12} y={9} /></Tool>
        <Tool label="Ejecutar acción" dim><circle cx="11" cy="11" r="9" fill="#ddd" stroke="#777" strokeWidth="2" strokeDasharray="4 2" /><circle cx="11" cy="11" r="6" fill="#fff" stroke="#777" strokeWidth="1.500" /><path d="M9 8l5 3-5 3z" fill="#555" /><Cursor x={14} y={10} /></Tool>
        <Caret dim />
        <Tool label="Seleccionar objetos"><path d="M1.500 1.500h20v19h-20z" stroke="#333" strokeDasharray="2 1.500" strokeWidth="1.200" /><path d="M2.500 2.500h13v13h-13z" fill={YEL} stroke={GOLD} /><Cursor x={10} y={8} /></Tool>
        <Caret />
        <Tool label="Seleccionar por expresión"><path d="M7.500 8.500h13v13h-13z" fill={YEL} stroke={GOLD} /><Epsilon /></Tool>
        <Caret />
        <Tool label="Deseleccionar todo"><path d="M1.500 1.500h13v13h-13z" fill={YEL} stroke={GOLD} /><Badge kind="no" /></Tool>
        <Tool label="Abrir tabla de atributos"><path d="M2.500 2.500h19v19h-19z" fill="#e6effa" stroke={BLUE} /><path d="M3 3h18v4H3z" fill="#a9c7ea" /><path d="M5 5h3M10 5h9M5 10h4M11 10h3M16 10h4M5 13h4M11 13h3M16 13h4M5 16h4M11 16h3M16 16h4M5 19h4M11 19h3M16 19h4" stroke="#5d8fc4" strokeWidth="1.200" /></Tool>
        <Tool label="Calculadora de campos"><path d="M2.500 1v20M21.500 1v20M2 5h20M2 11h20M2 17h20M1 22h22" stroke="#666" strokeWidth="1.600" /><g strokeWidth="1"><g fill="#f6a0a0" stroke="#c44"><circle cx="9" cy="5" r="2.200" /><circle cx="17" cy="5" r="2.200" /></g><g fill="#a5dca5" stroke="#4a9a4a"><circle cx="7" cy="11" r="2.200" /><circle cx="12" cy="11" r="2.200" /></g><g fill="#a5c8ec" stroke="#4a7fb5"><circle cx="8" cy="17" r="2.200" /><circle cx="13" cy="17" r="2.200" /><circle cx="18" cy="17" r="2.200" /></g></g></Tool>
        <Tool label="Resumen estadístico"><path d="M5 2h14v5h-1.500L16 4.500H10l5.500 7.500L9 19.500h7.500l1.500-3h2l-1 5.500H5v-2l6.500-8L5 4z" fill="#c01cc0" stroke="#74107a" /></Tool>
        <Tool label="Medir línea"><path d="M2 6h20M2.500 3.500v5M21.500 3.500v5" stroke="#4a6d95" strokeWidth="1.800" /><path d="M1.500 11.500h21v8h-21z" fill="#c9c9c9" stroke="#666" /><path d="M5.500 12v4M8.500 12v3M11.500 12v4M14.500 12v3M17.500 12v4M20 12v3" stroke="#555" /></Tool>
        <Caret />
        <div className="flex-1" />
        <button type="button" aria-label="Extender barra" className="mr-3 shrink-0"><svg viewBox="0 0 9 7" className="h-[7px] w-[9px]" fill="none" stroke="#000" strokeWidth="1.500" aria-hidden="true"><path d="M.7.7l3 2.800-3 2.800M4.900.7l3 2.800-3 2.800" /></svg></button>
        <VGrip className="w-2" />
        <Tool label="Contenido de la ayuda"><path d="M2 2h20v20H2z" fill={BLUE} stroke="#333" /><path d="M2 2h4v20H2z" fill="#2b3645" /><text x="14" y="18" fontSize="17" fill="#fff" textAnchor="middle" fontFamily="Liberation Serif">?</text></Tool>
      </div>

      <div role="toolbar" aria-label="Digitalización" className="flex h-[39px] shrink-0 items-center border-b border-[#b5b5b5] pl-[3px]">
        <VGrip className="w-[7px]" />
        <Tool label="Ediciones actuales"><g transform="translate(-3 0)"><Pencil y={false} /></g><g transform="translate(2 0)"><Pencil y={false} /></g><path d="M19 21h5l-2.500 3z" fill="#888" /></Tool>
        <Tool label="Conmutar edición"><Pencil /></Tool>
        <Tool label="Guardar cambios" dim><Disk /><path d="M12 21l7-11 4 2-7 11-4 1z" fill="#aaa" stroke="#777" /></Tool>
        <Tool label="Añadir objeto"><Blob /><Badge kind="gstar" /></Tool>
        <Tool label="Añadir cadena circular"><path d="M3 20C3 9 8 4 18 3" stroke="#999" strokeWidth="1.500" /><path d="M1.500 18.500h4v4h-4zM4.500 7.500h4v4h-4zM16.500 1.500h4v4h-4z" fill="#ddd" stroke="#999" /><Badge kind="gstar" /></Tool>
        <Caret dim />
        <Tool label="Mover objeto"><Blob /><Badge kind="right" /></Tool>
        <Tool label="Herramienta de nodos" dim><path d="M3 22L6 6l15-1M3.500 2.500h5v5h-5z" stroke="#777" strokeWidth="1.400" /><path d="M11 9l10 13" stroke="#888" strokeWidth="2" /><path d="M20 8L10 20" stroke="#999" strokeWidth="4" /></Tool>
        <Tool label="Borrar lo seleccionado" dim><path d="M4 8h16l-1 15H5zM9 11v9M12 11v9M15 11v9M2 5.500h20M8 5V2h8v3" stroke="#555" strokeWidth="1.700" /></Tool>
        <Tool label="Cortar" dim><path d="M1 7l15 8M1 15l15-8" stroke="#777" strokeWidth="2" /><circle cx="19" cy="6" r="2.800" stroke="#777" strokeWidth="1.500" /><circle cx="19" cy="17" r="2.800" stroke="#777" strokeWidth="1.500" /></Tool>
        <Tool label="Copiar"><Docs /></Tool>
        <Tool label="Pegar"><path d="M4.500 3.500h15v19h-15z" fill="#ddd" stroke="#999" /><path d="M7 7h10v13H7z" fill="#fff" stroke="#aaa" /><path d="M8 1.500h8v4H8z" fill="#aaa" stroke="#888" /><path d="M9 10h6M9 13h6M9 16h6" stroke="#999" /></Tool>
        <VGrip className="w-[13px] pl-[7px]" />
        <Tool label="Etiquetado"><g transform="translate(0 -2)"><Tag on /></g></Tool>
        <Tool label="Diagramas"><g stroke="#777" strokeWidth="0.700"><path d="M12 11L4 3a12 12 0 0 1 16 0z" fill="#e33030" /><path d="M11 12.500v11A11.500 11.500 0 0 1 2 5z" fill="#8ad838" /><path d="M13 12.500v11A11.500 11.500 0 0 0 22 5z" fill="#f6e84a" /></g></Tool>
        <Tool label="Resaltar etiquetas fijadas"><path d="M.7 2.700h22.600v19H.7z" fill="#dce9f8" stroke="#2a7ad4" strokeWidth="1.400" /><g transform="translate(0 -2)"><Tag on w={18} t="ab" /></g><path d="M18 9v9" stroke="#ccc" strokeWidth="2" /><circle cx="18" cy="18.500" r="4.300" fill="#c42525" stroke="#861515" /></Tool>
        <Tool label="Fijar etiquetas"><g transform="translate(0 -2)"><Tag w={18} t="ab" /></g><path d="M18 9v9" stroke="#ccc" strokeWidth="2" /><circle cx="18" cy="19" r="4" fill="#999" stroke="#888" /></Tool>
        <Tool label="Mostrar etiquetas"><g transform="translate(0 -3)"><Tag /></g><g transform="translate(8 10) scale(.66)"><Eye c="#999" /></g></Tool>
        <Tool label="Mover etiqueta"><g transform="translate(0 -3)"><Tag /></g><Badge kind="right" /></Tool>
        <Tool label="Rotar etiqueta"><g transform="translate(0 -3)"><Tag /></g><Badge kind="turn" /></Tool>
        <Tool label="Cambiar etiqueta"><g transform="translate(0 -3)"><Tag /></g><Badge kind="edit" /></Tool>
        <VGrip className="w-[16px] pl-[7px]" />
        <Tool label="Catálogo MetaSearch"><path d="M2 6v16h17" stroke="#aaa" strokeWidth="2" /><path d="M2.500 2.500h21v18h-21z" fill="#fff" stroke="#bbb" /><text x="13" y="14.500" fontSize="8" fontWeight="700" textAnchor="middle" fill="#444" fontFamily="DejaVu Sans">CSW</text></Tool>
        <VGrip className="w-[15px] pl-[5px]" />
        <Tool label="Consola de Python"><path d="M7 7V3.500C7 .5 16 .5 16 3.500V9c0 2-1 3-3 3H8c-2 0-3 1-3 3v2H3c-3-1-3-9 0-10h8z" fill="#3b78ab" /><path d="M16 18v2.500c0 3-8 3-8 0V15c0-2 1-3 3-3h4c2 0 3-1 3-3V7h2c3 1 3 9 0 10h-8z" fill="#ffd546" /><circle cx="9" cy="4" r="1" fill="#fff" /><path d="M17 16l6 3.500-6 3.500" stroke="#444" strokeWidth="1.600" /></Tool>
      </div>

      <main className="flex min-h-0 flex-1">
        <aside aria-label="Administrar capas" className="flex w-[51px] shrink-0 flex-col items-start border-r border-[#b0b0b0] pt-[7px] pl-1">
          <Grip className="h-[5px] w-[41px]" />
          {layerTools.map((t) => (
            <div key={t.label} className="flex h-[34px] items-center">
              <button type="button" aria-label={t.label} className="flex w-[31px] justify-center pr-px"><Icon>{t.icon}<Badge kind={t.badge} x={14} y={14} /></Icon></button>
              {t.caret && <Caret />}
            </div>
          ))}
          <Grip className="mt-2 h-[5px] w-[41px]" />
        </aside>

        <div className="flex w-[294px] shrink-0 flex-col pt-[2px]">
          <section aria-label="Panel del explorador" className="flex shrink-0 flex-col">
            <PanelTitle title="Panel del explorador" />
            <div role="toolbar" aria-label="Explorador" className="flex h-[34px] items-center pl-[2px]">
              <MiniTool label="Añadir capas seleccionadas"><path d="M2 2h18v18H2z" fill="#f4f4f4" stroke="#888" strokeWidth="1.600" /><circle cx="19" cy="20" r="3.800" fill="#69a56d" /></MiniTool>
              <MiniTool label="Actualizar explorador"><Refresh /></MiniTool>
              <MiniTool label="Filtrar explorador"><Funnel /></MiniTool>
              <MiniTool label="Plegar todo"><Branch up /></MiniTool>
              <MiniTool label="Propiedades"><Info /></MiniTool>
            </div>
            <ul className="rounded-sm border border-[#9f9f9f] bg-white pt-[2px] pl-1">
              {treeRows.map((r, i) => (
                <li key={r.name} className={`flex h-4 items-center ${r.child ? "w-[145px] bg-[#f0f0f0]" : ""}`}>
                  <BranchMark mark={r.mark} first={i === 0} last={i === treeRows.length - 1} />
                  {r.child && <svg viewBox="0 0 20 16" className="h-4 w-5 shrink-0" aria-hidden="true"><path d="M7.500 0v8M8 8.500h10" stroke="#9a9a9a" strokeDasharray="1 1" /></svg>}
                  <span className="flex items-center gap-[5px]">
                    <Icon className="h-4 w-4">{r.icon}</Icon>
                    {r.name}
                  </span>
                </li>
              ))}
            </ul>
          </section>

          <Grip className="mx-auto my-px h-[5px] w-[95px] shrink-0" />

          <section aria-label="Panel de capas" className="flex min-h-0 flex-1 flex-col">
            <PanelTitle title="Panel de capas" />
            <div role="toolbar" aria-label="Capas" className="flex h-[35px] shrink-0 items-center pl-[2px]">
              <MiniTool label="Estilo"><path d="M1 11l9-1 5 9-6 4z" fill="#f0a060" stroke="#b86830" /><path d="M10 10l3-3 5 6-3 5z" fill="#d34" /><path d="M15 9l7-7" stroke="#c98a3d" strokeWidth="4" /><path d="M3 14l9 7" stroke="#f6d24a" strokeWidth="2" /></MiniTool>
              <MiniTool label="Añadir grupo"><path d="M2 8h8v14H2zM6 5h8v14M10 2h9v17h-9M14 1v16" stroke="#777" strokeWidth="1.600" /><circle cx="19" cy="19.500" r="4" fill="#69a56d" /></MiniTool>
              <MiniTool label="Visibilidad"><Eye /><path d="M17 19h7l-3.500 4z" fill="#000" /></MiniTool>
              <MiniTool label="Filtrar leyenda"><Funnel /></MiniTool>
              <MiniTool label="Filtrar por expresión"><Epsilon /><path d="M12 23v-9h10v9M15 23v-5M19 23v-5" stroke="#999" strokeWidth="2" /></MiniTool>
              <Caret />
              <MiniTool label="Expandir todo"><Branch /></MiniTool>
              <MiniTool label="Contraer todo"><Branch up /></MiniTool>
              <MiniTool label="Eliminar capa"><path d="M2 2h18v18H2z" fill="#f4f4f4" stroke="#888" strokeWidth="1.600" /><rect x="13" y="15" width="11" height="8" rx="1" fill="#e05252" /><path d="M15 19h7" stroke="#fff" strokeWidth="2" /></MiniTool>
            </div>
            <ul className="min-h-0 flex-1 rounded-sm border-2 border-[#2a84d2] bg-white pl-[3px] font-bold">
              <li className="-ml-[3px] flex h-4 items-center bg-[#0078d7] pl-[3px] text-white">
                <BranchMark />
                <span className="flex w-[19px] pl-px"><CheckBox id="layer-chile" checked /></span>
                <span className="mr-1 h-4 w-4 bg-[#2f7350]" />
                <label htmlFor="layer-chile" className="flex-1 border border-dotted border-[#e8953a] pl-px leading-[14px] underline">clima_chile clima_chile2 Polygon</label>
              </li>
              <li className="flex h-4 items-center">
                <BranchMark mark="-" last />
                <span className="flex w-[19px] pl-px"><CheckBox id="layer-osm" checked /></span>
                <Icon className="mr-1 h-4 w-4"><Tiles /></Icon>
                <label htmlFor="layer-osm" className="pl-[2px]">OSM</label>
              </li>
            </ul>
          </section>
        </div>

        <section aria-label="Mapa" className="mt-px ml-[6px] min-w-0 flex-1 overflow-hidden rounded-sm border border-[#a8a8a8] bg-[#aad3df]">
          <MapCanvas />
        </section>

        <aside aria-label="Resultados" className="ml-[6px] flex w-[256px] shrink-0 flex-col pt-[2px]">
          <PanelTitle title="Resultados de la identificación" />
          <div role="toolbar" aria-label="Resultados" className="flex h-[34px] shrink-0 items-center pl-[2px]">
            <MiniTool label="Expandir árbol"><Branch /></MiniTool>
            <MiniTool label="Plegar árbol"><Branch up /></MiniTool>
            <MiniTool label="Expandir nuevos"><Branch /><path d="M8 0l2.500 5H16l-4 4 1 5.500L8 12l-5 2.500L4 9 0 5h5.500z" fill="#fcd92c" stroke="#d69a10" /></MiniTool>
            <MiniTool label="Formulario" dim><path d="M1 6h6M1 17h6" stroke="#777" strokeWidth="3" /><path d="M10 3.500h12v5H10zM10 14.500h12v5H10z" fill="#ccc" stroke="#777" strokeWidth="1.600" /></MiniTool>
            <MiniTool label="Limpiar resultados"><path d="M1.500 1.500h14v14h-14z" fill={YEL} stroke={GOLD} /><Badge kind="no" /></MiniTool>
            <MiniTool label="Copiar objeto"><Docs /></MiniTool>
            <MiniTool label="Imprimir"><path d="M5 3h14v6H5z" fill="#ddd" stroke="#999" /><rect x="1" y="8" width="22" height="9" rx="2" fill="#999" /><path d="M5 14h14v8H5z" fill="#ddd" stroke="#999" /></MiniTool>
          </div>
          <div className="mr-px flex min-h-0 flex-1 flex-col rounded-sm border border-[#9f9f9f] bg-white">
            <table className="w-full">
              <thead><tr><th scope="col" className="h-[21px] border border-[#8a8a8a] bg-linear-to-b from-[#fafafa] to-[#dcdcdc] pt-[2px] pl-[2px] text-left font-normal">Objeto espacial</th></tr></thead>
            </table>
            <div className="flex-1" />
            <div className="flex h-[17px] bg-[#ececec]">
              <button type="button" aria-label="Desplazar a la izquierda" className="flex w-4 items-center justify-center rounded-[3px] border border-[#888] bg-[#f6f6f6]"><svg viewBox="0 0 4 8" className="h-[7px] w-1" aria-hidden="true"><path d="M4 0v8L0 4z" /></svg></button>
              <div className="flex w-[146px] items-center justify-center border border-[#888] bg-linear-to-b from-[#fdfdfd] to-[#e2e2e2]"><span className="h-[10px] w-[19px] bg-[radial-gradient(circle_at_1px_1px,#b0b0b0_1px,transparent_1px)] bg-[length:4px_4px]" /></div>
              <div className="flex-1" />
              <button type="button" aria-label="Retroceder" className="flex w-4 items-center justify-center rounded-[3px] border border-[#888] bg-[#f6f6f6]"><svg viewBox="0 0 4 8" className="h-[7px] w-1" aria-hidden="true"><path d="M4 0v8L0 4z" /></svg></button>
              <button type="button" aria-label="Avanzar" className="flex w-4 items-center justify-center rounded-[3px] border border-[#888] bg-[#f6f6f6]"><svg viewBox="0 0 4 8" className="h-[7px] w-1" aria-hidden="true"><path d="M0 0v8l4-4z" /></svg></button>
            </div>
          </div>
          <div className="mt-[6px] flex h-5 items-center pl-1">
            <label htmlFor="mode" className="w-8">Modo</label>
            <Combo id="mode" options={["Capa actual", "Todas las capas"]} className="w-[85px]" />
            <span className="ml-[6px] flex items-center gap-[5px]"><CheckBox id="auto" checked={false} /><label htmlFor="auto" className="whitespace-nowrap">Auto abrir formulario</label></span>
          </div>
          <div className="mt-2 mb-[7px] flex h-[22px] items-center pl-1">
            <label htmlFor="view" className="w-[22px]">Ver</label>
            <Combo id="view" options={["Árbol", "Tabla"]} className="w-[72px]" />
            <button type="button" className="mr-[5px] ml-auto h-[22px] w-[47px] rounded-[3px] border border-[#777] bg-linear-to-b from-white to-[#ececec]">Ayuda</button>
          </div>
        </aside>
      </main>

      <footer className="flex h-[31px] shrink-0 items-center pt-px pl-1">
        <p className="w-[153px] shrink-0 overflow-hidden whitespace-nowrap">Eliminada una entrada de la ley</p>
        <label htmlFor="coord" className="ml-[2px] w-[63px] shrink-0">Coordenada</label>
        <input id="coord" defaultValue="-93.16,-26.16" className="h-5 w-[206px] rounded-[3px] border border-[#a5a5a5] bg-white text-center text-[11px]" />
        <button type="button" aria-label="Seguimiento del ratón" className="mr-[9px] ml-[5px] flex w-5 justify-center">
          <Icon className="h-4 w-4"><path d="M2 3l6 2M2 9l6 1M4 15l6-3" stroke="#333" strokeWidth="1.800" /><path d="M8 1l8 9 4 6c2 4-2 7-6 5l-5-5-5-9z" fill="#bbb" stroke="#222" strokeWidth="2" /><path d="M7 8l9 9M11 6l7 9M16 6l6-5" stroke="#333" strokeWidth="2" /></Icon>
        </button>
        <label htmlFor="scale" className="w-[34px] shrink-0">Escala</label>
        <span className="flex h-5 w-[88px] shrink-0 rounded-[3px] border border-[#a5a5a5] bg-white">
          <input id="scale" defaultValue="1:19.409.884" className="w-0 flex-1 bg-transparent pl-px text-[11px]" />
          <button type="button" aria-label="Escalas predefinidas" className="flex w-4 items-center justify-center border-l border-[#b4b4b4] bg-[#f0f0f0]"><svg viewBox="0 0 8 4" className="h-1 w-2" aria-hidden="true"><path d="M0 0h8L4 4z" /></svg></button>
        </span>
        <button type="button" aria-label="Bloquear escala" className="mr-3 ml-[7px]">
          <svg viewBox="0 0 14 16" className="h-4 w-[14px]" fill="none" aria-hidden="true"><path d="M3.500 9V5a3.500 3.500 0 0 1 7 0v4" stroke="#aaa" strokeWidth="2" /><rect x="1" y="8" width="12" height="8" rx="1" fill="#666" /></svg>
        </button>
        <label htmlFor="magnifier" className="w-16 shrink-0">Amplificador</label>
        <Spin id="magnifier" value="100%" />
        <label htmlFor="rotation" className="ml-2 w-[53px] shrink-0">Rotación</label>
        <Spin id="rotation" value="0,0" />
        <span className="ml-[7px] flex items-center gap-1"><CheckBox id="render" checked /><label htmlFor="render">Representar</label></span>
        <button type="button" className="ml-[19px] flex items-center gap-[3px] whitespace-nowrap">
          <Icon className="h-4 w-4"><circle cx="12" cy="12" r="9" stroke="#444" strokeWidth="4.500" /><path d="M12 0v24M0 12h24" stroke="#222" strokeWidth="2" /><circle cx="12" cy="12" r="5" fill="#eee" stroke="#333" strokeWidth="1.500" /><path d="M12 8v8M8 12h8" stroke="#888" /></Icon>
          EPSG:4326 (al vuelo)
        </button>
        <button type="button" aria-label="Mensajes" className="mr-[22px] ml-auto">
          <svg viewBox="0 0 16 16" className="h-4 w-4" aria-hidden="true"><path d="M8 1c5 0 8 2.500 8 6 0 2-1 3.500-2 4.500L15 15l-4-2C4 14 0 11 0 7s3-6 8-6z" fill="#5a5a5a" /><path d="M3.500 6h2v2h-2zM7 6h2v2H7zM10.500 6h2v2h-2z" fill="#fff" /></svg>
        </button>
        <svg viewBox="0 0 12 12" className="h-3 w-3 self-end" stroke="#999" aria-hidden="true"><path d="M0 12L12 0M4 12l8-8M8 12l4-4" /></svg>
      </footer>
    </div>
  );
}
